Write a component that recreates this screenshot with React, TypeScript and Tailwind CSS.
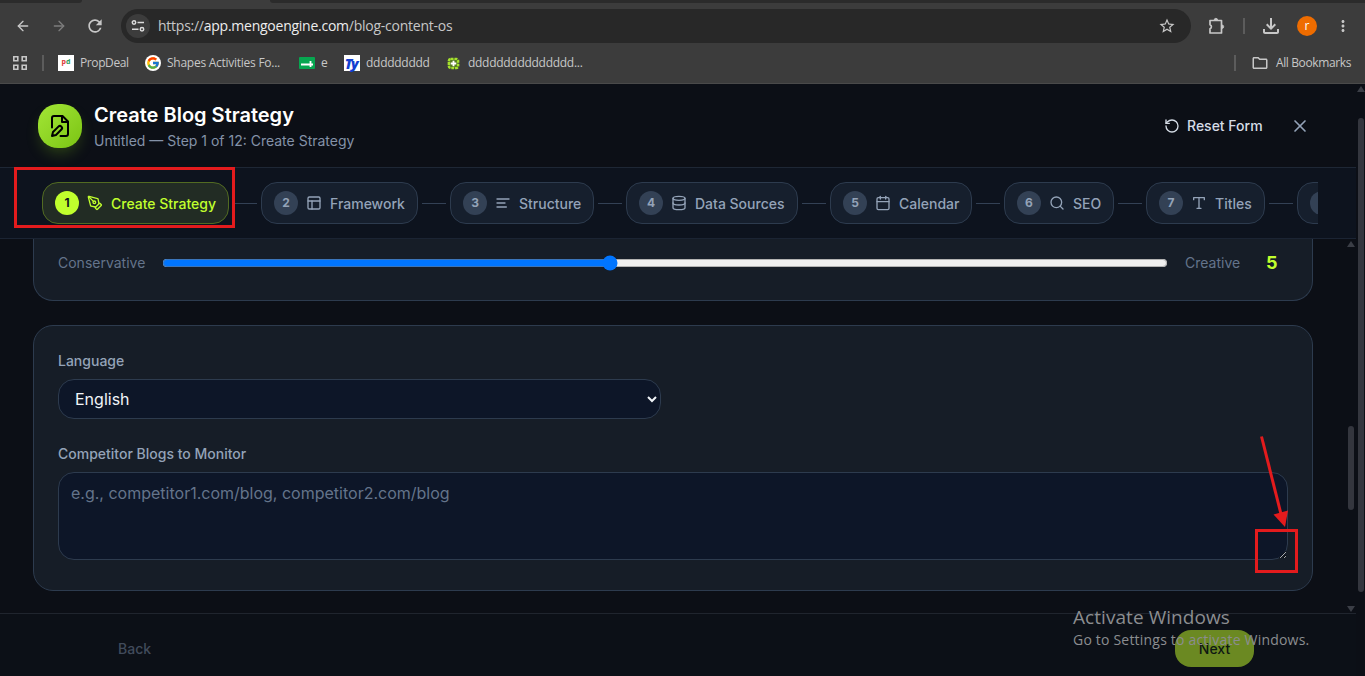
import type { ReactNode } from 'react';
import { ArrowLeft, ArrowRight, Calendar, Database, PanelsTopLeft, PenTool, RotateCcw, Search, X } from 'lucide-react';
import { MdOutlineFileDownload, MdMoreVert, MdRefresh, MdStarBorder, MdOutlineFolder } from 'react-icons/md';
import { FcGoogle } from 'react-icons/fc';
import { clsx } from 'clsx';

interface Step {
    label: string;
    icon: ReactNode;
    width: string;
}

function AlignLeftIcon() {
    return (
        <svg viewBox="0 0 24 24" className="h-4 w-4" fill="none" stroke="currentColor" strokeWidth="2" strokeLinecap="round">
            <path d="M21 6H3M15 12H3M17 18H3" />
        </svg>
    );
}

function TypeIcon() {
    return (
        <svg viewBox="0 0 24 24" className="h-4 w-4" fill="none" stroke="currentColor" strokeWidth="2" strokeLinecap="round" strokeLinejoin="round">
            <path d="M4 7V4h16v3M9 20h6M12 4v16" />
        </svg>
    );
}

function FileEditIcon() {
    return (
        <svg viewBox="0 0 24 24" className="h-6 w-6" fill="none" stroke="currentColor" strokeWidth="2" strokeLinecap="round" strokeLinejoin="round">
            <path d="M4 13.5V4a2 2 0 0 1 2-2h8.5L20 7.5V20a2 2 0 0 1-2 2h-5.5" />
            <path d="M14 2v6h6" />
            <path d="M10.42 12.61a2.1 2.1 0 1 1 2.97 2.97L7.95 21 4 22l.99-3.95 5.43-5.44Z" />
        </svg>
    );
}

function ExtensionIcon() {
    return (
        <svg viewBox="0 0 18 18" className="ml-[17px] h-[18px] w-[18px]" fill="none" stroke="currentColor" strokeWidth="1.7" strokeLinejoin="round">
            <path d="M2 3.500h11.500V16H2v-4.200a2.200 2.200 0 0 0 0-4.100Z" />
            <path d="M6.200 3a1.700 1.700 0 0 1 3.400 0ZM14 8a1.700 1.700 0 0 1 0 3.400Z" fill="currentColor" strokeWidth="0.8" />
        </svg>
    );
}

const steps: Step[] = [
    { label: 'Create Strategy', icon: <PenTool className="h-4 w-4" />, width: 'w-[187px]' },
    { label: 'Framework', icon: <PanelsTopLeft className="h-4 w-4" />, width: 'w-[157px]' },
    { label: 'Structure', icon: <AlignLeftIcon />, width: 'w-[144px]' },
    { label: 'Data Sources', icon: <Database className="h-4 w-4" />, width: 'w-[172px]' },
    { label: 'Calendar', icon: <Calendar className="h-4 w-4" />, width: 'w-[142px]' },
    { label: 'SEO', icon: <Search className="h-4 w-4" />, width: 'w-[110px]' },
    { label: 'Titles', icon: <TypeIcon />, width: 'w-[119px]' },
    { label: '', icon: <AlignLeftIcon />, width: 'w-[134px]' },
];

function BrowserBar() {
    return (
        <div className="h-[84px] border-b border-[#4a4a4a] bg-[#3c3c3c] font-['Open_Sans',sans-serif] text-[#c7c7c7]">
            <div className="flex h-[3px] bg-[#3c3c3c]">
                <div className="w-[82px] rounded-br-md bg-[#2b2b2b]" />
                <div className="w-[188px]" />
                <div className="flex-1 rounded-bl-md bg-[#2b2b2b]" />
            </div>
            <div className="flex h-[46px] items-center">
                <ArrowLeft className="ml-[15px] h-4 w-4" />
                <ArrowRight className="ml-5 h-4 w-4 text-[#7c7c7c]" />
                <MdRefresh className="ml-[18px] h-5 w-5" />
                <div className="ml-4 flex h-[34px] w-[1070px] items-center rounded-full bg-[#282828] pl-[5px]">
                    <div className="flex h-6 w-6 items-center justify-center rounded-full bg-[#3c3c3c]">
                        <svg viewBox="0 0 14 14" className="h-3.5 w-3.5" fill="none" stroke="#dcdcdc" strokeWidth="1.5">
                            <circle cx="3" cy="3.5" r="1.7" />
                            <path d="M6.5 3.5H13M1 10.3h6.5" />
                            <circle cx="11" cy="10.3" r="1.7" />
                        </svg>
                    </div>
                    <p className="ml-2 flex-1 whitespace-nowrap pb-px text-[14px] tracking-[-0.25px]">
                        https://<span className="text-[#ededed]">app.mengoengine.com</span>/blog-content-os
                    </p>
                    <MdStarBorder className="mr-[15px] h-[18px] w-[18px]" />
                </div>
                <ExtensionIcon />
                <div className="ml-[17px] h-4 w-0.5 bg-[#5c5c5c]" />
                <MdOutlineFileDownload className="ml-[14px] h-6 w-6" />
                <div className="ml-[14px] flex h-5 w-5 items-center justify-center rounded-full bg-[#ee6c00] pb-px text-[12px] text-white">r</div>
                <MdMoreVert className="ml-[17px] h-[18px] w-[18px]" />
            </div>
            <div className="flex h-7 items-center whitespace-nowrap text-[12px]">
                <svg viewBox="0 0 14 14" className="ml-[13px] h-3.5 w-3.5" fill="none" stroke="currentColor" strokeWidth="1.6">
                    <path d="M.8.8h4v4h-4zM9.200.8h4v4h-4zM.8 9.200h4v4h-4zM9.200 9.200h4v4h-4z" />
                </svg>
                <div className="ml-[15px] h-4 w-0.5 bg-[#5c5c5c]" />
                <div className="ml-[14px] flex h-4 w-4 items-center justify-center bg-white pb-0.5 text-[7px] font-bold text-[#d33]">
                    p<span className="text-[#2a9a5a]">d</span>
                </div>
                <span className="ml-1.5 w-[49px] tracking-[-0.4px]">PropDeal</span>
                <div className="ml-4 flex h-4 w-4 items-center justify-center rounded-full bg-white">
                    <FcGoogle className="h-3.5 w-3.5" />
                </div>
                <span className="ml-1.5 w-[114px] tracking-[-0.26px]">Shapes Activities Fo...</span>
                <svg viewBox="0 0 16 12" className="ml-[18px] h-3 w-4">
                    <rect width="16" height="12" rx="1" fill="#07a650" />
                    <path d="M2 7.500h12M11.500 4v6" stroke="#fff" strokeWidth="1.800" />
                </svg>
                <span className="ml-1.5 w-[7px]">e</span>
                <div className="ml-4 flex h-4 w-4 items-center justify-center bg-white pr-0.5 text-[14px] font-extrabold italic tracking-[-1.5px] text-[#123fd0]">Ty</div>
                <span className="ml-1.5 w-[64px] tracking-[-0.27px]">ddddddddd</span>
                <svg viewBox="0 0 14 14" className="ml-[17px] h-[13px] w-[13px]">
                    <rect x="2" y="2" width="10" height="10" rx="2" fill="#587d22" stroke="#a6e22e" strokeWidth="2.600" strokeDasharray="3 1" />
                    <path d="M7 4v6M4 7h6" stroke="#fff" strokeWidth="2" />
                </svg>
                <span className="ml-2 w-[115px] tracking-[-0.28px]">ddddddddddddddd...</span>
                <div className="ml-auto h-4 w-0.5 bg-[#5c5c5c]" />
                <MdOutlineFolder className="ml-[15px] h-[18px] w-[18px]" />
                <span className="ml-[7px] mr-[13px] w-[76px] tracking-[-0.38px]">All Bookmarks</span>
            </div>
        </div>
    );
}

function StepPill({ step, index }: { step: Step; index: number }) {
    const active = index === 0;

    return (
        <div
            className={clsx(
                'flex h-[42px] shrink-0 items-center gap-2 whitespace-nowrap rounded-2xl border px-3 text-sm font-medium',
                step.width,
                active ? 'border-[#526b22] bg-[#222c24] text-[#c0ff2d]' : 'border-[#2d3b4e] bg-[#161f2d] text-[#94a3b8]',
            )}
        >
            <span
                className={clsx(
                    'flex h-6 w-6 shrink-0 items-center justify-center rounded-full text-xs font-bold',
                    active ? 'bg-[#c0ff2d] text-[#10151f]' : 'bg-[#334155] text-[#94a3b8]',
                )}
            >
                {step.label && index + 1}
            </span>
            <span className="shrink-0">{step.icon}</span>
            <span className="pt-0.5">{step.label}</span>
        </div>
    );
}

function Stepper() {
    return (
        <div className="h-[71px] border-b border-[#1b2433] bg-[#0d131e] pl-[38px] pr-[38px]">
            <div className="flex h-[70px] items-center overflow-hidden pl-1">
                {steps.map((step, index) => (
                    <div key={index} className="flex shrink-0 items-center">
                        {index > 0 && <div className="mx-1 h-px w-6 bg-[#334155]" />}
                        <StepPill step={step} index={index} />
                    </div>
                ))}
            </div>
        </div>
    );
}

function FormArea() {
    return (
        <div className="flex h-[374px] overflow-hidden bg-[#0c0f16]">
            <div className="ml-[33px] w-[1280px]">
                <div className="flex h-[62px] items-start rounded-b-[20px] border border-t-0 border-[#2d3b4e] bg-[#161d27] px-6 pt-3.5 text-sm leading-5 text-[#64748b]">
                    <span className="w-[104px] shrink-0">Conservative</span>
                    <input type="range" min={1} max={10} defaultValue={5} className="m-0 mt-0.5 h-4 w-[1006px] shrink-0" />
                    <span className="ml-[17px] w-[55px] shrink-0">Creative</span>
                    <span className="ml-[26px] text-lg font-bold leading-5 text-[#c0ff2d]">5</span>
                </div>
                <div className="mt-6 h-[266px] rounded-[20px] border border-[#2d3b4e] bg-[#161d27] px-6 pt-[25px]">
                    <label className="block text-sm font-medium leading-5 text-[#94a3b8]">Language</label>
                    <select className="mt-2 block h-10 w-[603px] rounded-2xl border border-[#2d3b4e] bg-[#0d1628] px-3 text-base text-[#f1f5f9]">
                        <option>English</option>
                    </select>
                    <label className="mt-[25px] block text-sm font-medium leading-5 text-[#94a3b8]">Competitor Blogs to Monitor</label>
                    <textarea
                        placeholder="e.g., competitor1.com/blog, competitor2.com/blog"
                        className="mt-2 block h-[88px] w-[1230px] rounded-2xl border border-[#2d3b4e] bg-[#0d1628] px-3 py-2 text-base text-white placeholder:text-[#64748b]"
                    />
                </div>
            </div>
            <div className="ml-auto flex w-[10px] flex-col items-center">
                <div className="mt-[2px] h-0 w-0 border-x-[4px] border-b-[6px] border-x-transparent border-b-[#3b3e46]" />
                <div className="mt-[179px] h-[84px] w-1.5 rounded-full bg-[#34363e]" />
                <div className="mt-[96px] h-0 w-0 border-x-[4px] border-t-[6px] border-x-transparent border-t-[#3b3e46]" />
            </div>
        </div>
    );
}

function Annotations() {
    return (
        <>
            <div className="absolute left-[14px] top-[167px] h-[61px] w-[221px] border-[3px] border-[#e31b1d]" />
            <div className="absolute left-[1255px] top-[529px] h-[44px] w-[43px] border-[3px] border-[#e31b1d]" />
            <svg viewBox="0 0 32 94" className="absolute left-[1258px] top-[434px] h-[94px] w-8">
                <path d="M3.500 2.500 23 80" stroke="#e31b1d" strokeWidth="3" />
                <path d="M15.500 80.500 30 76.500 27 93Z" fill="#e31b1d" />
            </svg>
            <div className="absolute left-[1073px] top-[605px] whitespace-nowrap font-['Open_Sans',sans-serif] text-[#8b8d90]">
                <p className="text-[19px] leading-6 tracking-[0.06px]">Activate Windows</p>
                <p className="mt-px text-[14px] leading-5 tracking-[0.2px]">Go to Settings to activate Windows.</p>
            </div>
        </>
    );
}

export default function App() {
    return (
        <div className="relative h-[676px] w-[1365px] overflow-hidden bg-[#0c0f16] font-['Inter',sans-serif]">
            <BrowserBar />
            <div className="flex h-[592px]">
                <div className="w-[1356px]">
                    <header className="flex h-[84px] items-start border-b border-[#1e2735] pl-[38px] pt-5">
                        <div className="flex h-11 w-11 items-center justify-center rounded-[20px] bg-linear-to-br from-[#a3e635] to-[#7bc411] text-black shadow-[0_8px_16px_-4px_rgba(132,204,22,0.3)]">
                            <FileEditIcon />
                        </div>
                        <div className="ml-3 w-[1070px]">
                            <h1 className="-mt-[3px] text-xl font-semibold leading-7 text-white">Create Blog Strategy</h1>
                            <p className="mt-0.5 text-sm leading-5 text-[#8492a8]">Untitled — Step 1 of 12: Create Strategy</p>
                        </div>
                        <button className="mt-3 flex items-center gap-[7px] whitespace-nowrap text-sm font-medium leading-5 text-[#d5dce6]">
                            <RotateCcw className="h-4 w-4" />
                            Reset Form
                        </button>
                        <X className="ml-[27px] mt-3 h-5 w-5 text-[#94a3b8]" />
                    </header>
                    <Stepper />
                    <FormArea />
                    <footer className="flex h-[63px] items-start justify-between border-t border-[#20252e] bg-[#0c1017] pl-[118px] pr-[102px] pt-4 text-sm font-medium">
                        <span className="mt-[9px] leading-5 text-[#414b5b]">Back</span>
                        <button className="h-[37px] w-[79px] rounded-2xl bg-[#6b8922] text-[#0e1712]">Next</button>
                    </footer>
                </div>
                <div className="flex w-[9px] flex-col items-center">
                    <div className="mt-[2px] h-0 w-0 border-x-[4px] border-b-[6px] border-x-transparent border-b-[#3b3e46]" />
                    <div className="mt-[26px] h-[474px] w-1.5 rounded-full bg-[#34363e]" />
                </div>
            </div>
            <Annotations />
        </div>
    );
}
